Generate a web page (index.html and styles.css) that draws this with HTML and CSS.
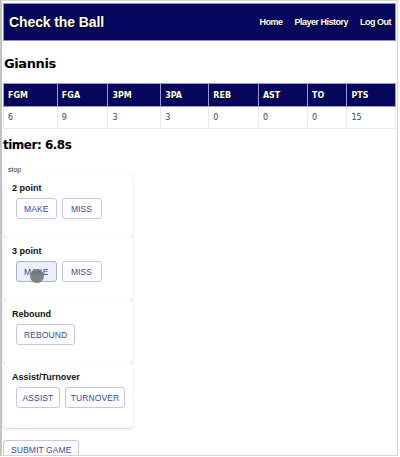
FILE: index.html
```html
<!DOCTYPE html>
<html>
<head>
<meta charset="utf-8">
<link rel="stylesheet" href="styles.css">
</head>
<body>
<div class="window">
  <nav class="navbar">
    <div class="brand">Check the Ball</div>
    <div class="links">
      <span class="link">Home</span>
      <span class="link">Player History</span>
      <span class="link">Log Out</span>
    </div>
  </nav>
  <h1 class="player">Giannis</h1>
  <table class="stats">
    <thead>
      <tr><th>FGM</th><th>FGA</th><th>3PM</th><th>3PA</th><th>REB</th><th>AST</th><th>TO</th><th>PTS</th></tr>
    </thead>
    <tbody>
      <tr><td>6</td><td>9</td><td>3</td><td>3</td><td>0</td><td>0</td><td>0</td><td>15</td></tr>
    </tbody>
  </table>
  <h2 class="timer">timer: 6.8s</h2>
  <div class="stop">stop</div>
  <div class="cards">
    <div class="card">
      <div class="card-title">2 point</div>
      <div class="btns"><span class="btn">MAKE</span><span class="btn">MISS</span></div>
    </div>
    <div class="card">
      <div class="card-title">3 point</div>
      <div class="btns"><span class="btn active">MAKE<span class="touch"></span></span><span class="btn">MISS</span></div>
    </div>
    <div class="card">
      <div class="card-title">Rebound</div>
      <div class="btns"><span class="btn">REBOUND</span></div>
    </div>
    <div class="card last">
      <div class="card-title">Assist/Turnover</div>
      <div class="btns"><span class="btn">ASSIST</span><span class="btn">TURNOVER</span></div>
    </div>
  </div>
  <div class="submit-row"><span class="btn submit">SUBMIT GAME</span></div>
</div>
</body>
</html>
```
FILE: styles.css
```css
html, body {
  margin: 0;
  padding: 0;
  background: #ffffff;
}
.window {
  box-sizing: border-box;
  width: 398px;
  height: 456px;
  overflow: hidden;
  border-top: 1px solid #d6d6d6;
  border-left: 2px solid #c4c4c4;
  border-right: 1px solid #d4d4d4;
  border-bottom: 1px solid #d4d4d4;
  padding: 2px 1px 0 1px;
  font-family: "Liberation Sans", Arial, sans-serif;
}
.navbar {
  display: flex;
  align-items: center;
  justify-content: space-between;
  height: 38px;
  box-sizing: border-box;
  background: #07065e;
  border: 1px solid #8f8fc8;
  padding: 0 4px 0 5px;
}
.brand {
  color: #ffffff;
  font-weight: bold;
  font-size: 14px;
  letter-spacing: -0.1px;
  text-shadow: 1px 1px 1px #000;
}
.links {
  display: flex;
  gap: 12px;
}
.link {
  color: #ffffff;
  font-weight: bold;
  font-size: 9px;
  letter-spacing: -0.5px;
  text-shadow: 1px 1px 1px #000;
}
.player {
  margin: 14px 0 0 1px;
  font-family: "DejaVu Sans", Verdana, sans-serif;
  font-size: 13px;
  letter-spacing: -0.4px;
  font-weight: bold;
  line-height: 18px;
  color: #000;
}
.stats {
  margin-top: 10px;
  width: 100%;
  border-collapse: collapse;
  font-family: "DejaVu Sans", Verdana, sans-serif;
  font-size: 8px;
}
.stats th {
  background: #07065e;
  color: #ffffff;
  text-align: left;
  font-weight: bold;
  height: 22px;
  padding: 0 4px;
  border: 1px solid #9a9ad0;
  text-shadow: 1px 1px 0 #000;
}
.stats td {
  color: #444;
  height: 21px;
  padding: 0 4px;
  border: 1px solid #ececec;
  border-top: none;
}
.timer {
  margin: 8px 0 0 0;
  font-family: "DejaVu Sans", Verdana, sans-serif;
  font-size: 12px;
  letter-spacing: -0.5px;
  font-weight: bold;
  line-height: 16px;
}
.stop {
  margin: 12px 0 0 5px;
  font-size: 7px;
  color: #333;
  line-height: 9px;
}
.cards {
  width: 130px;
}
.card {
  border-radius: 4px;
  box-shadow: 0 1px 2px rgba(0,0,0,0.18), 0 0 1px rgba(0,0,0,0.12);
  padding: 8px 8px 18px 8px;
  height: 63px;
  box-sizing: border-box;
  background: #fff;
}
.card.last {
  height: 65px;
}
.card-title {
  font-size: 9px;
  font-weight: bold;
  line-height: 12px;
  color: #111;
  margin-bottom: 4px;
  padding-left: 1px;
}
.btns {
  display: flex;
  gap: 5px;
  padding-left: 5px;
}
.btn {
  position: relative;
  display: inline-flex;
  align-items: center;
  justify-content: center;
  height: 21px;
  min-width: 40px;
  box-sizing: border-box;
  padding: 0 7px;
  border: 1px solid #c3c6e6;
  border-radius: 3px;
  color: #3a44a8;
  font-size: 8.5px;
  letter-spacing: 0.1px;
  background: #fff;
}
.btn.active {
  background: #eceef9;
  border-color: #aab0dc;
}
.touch {
  position: absolute;
  left: 13px;
  top: 7px;
  width: 14px;
  height: 14px;
  border-radius: 50%;
  background: rgba(110,110,110,0.85);
}
.submit-row {
  margin-top: 11px;
}
.submit {
  padding: 0 7px;
}
```
